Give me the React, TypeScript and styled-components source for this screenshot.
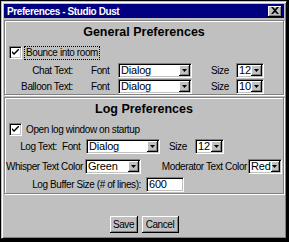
import React from "react";
import styled, { createGlobalStyle } from "styled-components";

const Global = createGlobalStyle`
	html, body {
		margin: 0;
		background: #000;
	}
	body {
		font-family: "Liberation Sans", Arial, sans-serif;
		font-size: 10px;
		letter-spacing: -0.4px;
		color: #000;
	}
`;

const Window = styled.div`
	margin: 1px 0 0 1px;
	width: 286px;
	height: 238px;
	box-sizing: border-box;
	background: #c0c0c0;
	border-top: 1px solid #c0c0c0;
	border-left: 1px solid #c0c0c0;
	border-right: 1px solid #000;
	border-bottom: 1px solid #000;
	box-shadow: inset 1px 1px 0 #fff, inset -1px -1px 0 #808080;
	padding: 2px;
	display: flex;
	flex-direction: column;
`;

const TitleBar = styled.div`
	height: 14px;
	background: #000080;
	color: #fff;
	font-weight: bold;
	font-size: 10px;
	display: flex;
	align-items: center;
	justify-content: space-between;
	padding: 0 2px 0 3px;
`;

const CloseBtn = styled.div`
	width: 14px;
	height: 11px;
	box-sizing: border-box;
	background: #c0c0c0;
	border-right: 1px solid #000;
	border-bottom: 1px solid #000;
	box-shadow: inset 1px 1px 0 #fff, inset -1px -1px 0 #808080;
	display: flex;
	align-items: center;
	justify-content: center;
`;

const Panel = styled.div<{ h: number }>`
	margin-top: 2px;
	height: ${p => p.h}px;
	box-sizing: border-box;
	border: 1px solid #808080;
	box-shadow: inset 1px 1px 0 #fff, 1px 1px 0 #fff;
	display: flex;
	flex-direction: column;
`;

const Heading = styled.div`
	font-size: 12.5px;
	letter-spacing: 0;
	font-weight: bold;
	text-align: center;
	margin-top: 4px;
	height: 16px;
`;

const CheckRow = styled.div<{ top: number }>`
	display: flex;
	align-items: center;
	margin: ${p => p.top}px 0 0 4px;
	height: 13px;
`;

const Box = styled.div`
	width: 13px;
	height: 13px;
	box-sizing: border-box;
	background: #fff;
	border-top: 1px solid #808080;
	border-left: 1px solid #808080;
	border-right: 1px solid #fff;
	border-bottom: 1px solid #fff;
	box-shadow: inset 1px 1px 0 #000, inset -1px -1px 0 #c0c0c0;
	display: flex;
	align-items: center;
	justify-content: center;
`;

const CheckLabel = styled.span<{ focus?: boolean }>`
	margin-left: 3px;
	padding: 0 1px;
	line-height: 12px;
	outline: ${p => (p.focus ? "1px dotted #000" : "none")};
`;

const Row = styled.div<{ top: number }>`
	display: flex;
	align-items: center;
	height: 15px;
	margin-top: ${p => p.top}px;
`;

const Label = styled.span<{ w: number; ml?: number; right?: boolean }>`
	display: inline-block;
	width: ${p => p.w}px;
	margin-left: ${p => p.ml || 0}px;
	text-align: ${p => (p.right ? "right" : "left")};
	white-space: nowrap;
	flex-shrink: 0;
`;

const Field = styled.div<{ w: number; ml: number }>`
	width: ${p => p.w}px;
	margin-left: ${p => p.ml}px;
	height: 15px;
	box-sizing: border-box;
	background: #fff;
	border-top: 1px solid #808080;
	border-left: 1px solid #808080;
	border-right: 1px solid #fff;
	border-bottom: 1px solid #fff;
	box-shadow: inset 1px 1px 0 #000, inset -1px -1px 0 #c0c0c0;
	display: flex;
	align-items: center;
	padding-left: 2px;
	flex-shrink: 0;
	overflow: hidden;
`;

const FieldText = styled.span`
	flex: 1;
	line-height: 13px;
	font-size: 11px;
	letter-spacing: -0.2px;
`;

const DropBtn = styled.div`
	width: 11px;
	height: 11px;
	margin-right: 1px;
	box-sizing: border-box;
	background: #c0c0c0;
	border-right: 1px solid #000;
	border-bottom: 1px solid #000;
	box-shadow: inset 1px 1px 0 #fff, inset -1px -1px 0 #808080;
	display: flex;
	align-items: center;
	justify-content: center;
`;

const Footer = styled.div`
	flex: 1;
	display: flex;
	justify-content: center;
	align-items: flex-end;
	padding-bottom: 3px;
	gap: 4px;
	padding-left: 1px;
`;

const Button = styled.div<{ w: number }>`
	width: ${p => p.w}px;
	height: 17px;
	box-sizing: border-box;
	border-right: 1px solid #000;
	border-bottom: 1px solid #000;
	box-shadow: inset 1px 1px 0 #fff, inset -1px -1px 0 #808080;
	display: flex;
	align-items: center;
	justify-content: center;
`;

const Tick = () => (
	<svg width="7" height="7" viewBox="0 0 7 7">
		<path d="M0 2 L0 4 L2 6 L7 1 L7 -1 L2 4 Z" fill="#000" />
	</svg>
);

const Combo = ({ w, ml, value }: { w: number; ml: number; value: string }) => (
	<Field w={w} ml={ml}>
		<FieldText>{value}</FieldText>
		<DropBtn>
			<svg width="5" height="3" viewBox="0 0 5 3">
				<path d="M0 0 H5 L2.5 3 Z" fill="#000" />
			</svg>
		</DropBtn>
	</Field>
);

export default function App() {
	return (
		<>
			<Global />
			<Window>
				<TitleBar>
					<span>Preferences - Studio Dust</span>
					<CloseBtn>
						<svg width="8" height="7" viewBox="0 0 8 7">
							<path d="M0 0 L2 0 L4 2 L6 0 L8 0 L5 3.5 L8 7 L6 7 L4 5 L2 7 L0 7 L3 3.5 Z" fill="#000" />
						</svg>
					</CloseBtn>
				</TitleBar>
				<Panel h={75}>
					<Heading>General Preferences</Heading>
					<CheckRow top={5}>
						<Box><Tick /></Box>
						<CheckLabel focus>Bounce into room</CheckLabel>
					</CheckRow>
					<Row top={4}>
						<Label w={68} right>Chat Text:</Label>
						<Label w={20} ml={18}>Font</Label>
						<Combo w={74} ml={7} value="Dialog" />
						<Label w={17} ml={19}>Size</Label>
						<Combo w={28} ml={8} value="12" />
					</Row>
					<Row top={1}>
						<Label w={68} right>Balloon Text:</Label>
						<Label w={20} ml={18}>Font</Label>
						<Combo w={74} ml={7} value="Dialog" />
						<Label w={17} ml={19}>Size</Label>
						<Combo w={28} ml={8} value="10" />
					</Row>
				</Panel>
				<Panel h={97}>
					<Heading>Log Preferences</Heading>
					<CheckRow top={5}>
						<Box><Tick /></Box>
						<CheckLabel>Open log window on startup</CheckLabel>
					</CheckRow>
					<Row top={3}>
						<Label w={52} right>Log Text:</Label>
						<Label w={20} ml={5}>Font</Label>
						<Combo w={74} ml={4} value="Dialog" />
						<Label w={17} ml={9}>Size</Label>
						<Combo w={29} ml={9} value="12" />
					</Row>
					<Row top={5}>
						<Label w={78} ml={0} right>Whisper Text Color</Label>
						<Combo w={56} ml={2} value="Green" />
						<Label w={105} ml={1} right>Moderator Text Color</Label>
						<Combo w={34} ml={1} value="Red" />
					</Row>
					<Row top={3}>
						<Label w={136} right>Log Buffer Size (# of lines):</Label>
						<Field w={38} ml={5}>
							<FieldText>600</FieldText>
						</Field>
					</Row>
				</Panel>
				<Footer>
					<Button w={28}>Save</Button>
					<Button w={37}>Cancel</Button>
				</Footer>
			</Window>
		</>
	);
}
